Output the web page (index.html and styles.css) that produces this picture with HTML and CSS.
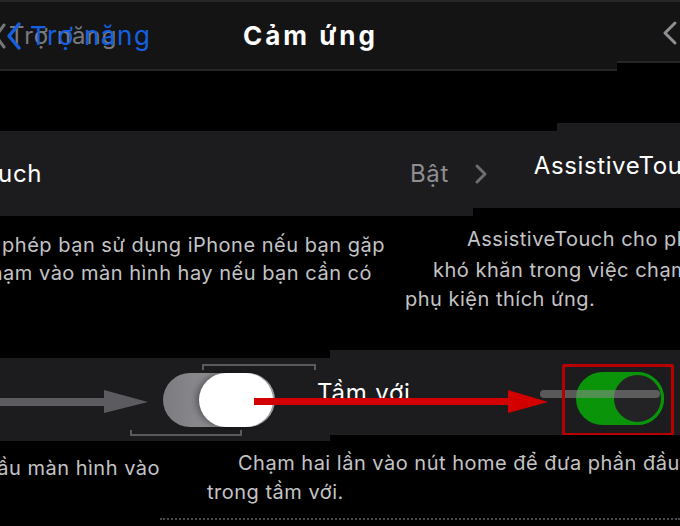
FILE: index.html
```html
<!DOCTYPE html>
<html lang="vi">
<head>
<meta charset="utf-8">
<title>Cảm ứng</title>
<link rel="stylesheet" href="styles.css">
</head>
<body>
<div class="screen">
  <header class="nav">
    <div class="back">
      <div class="back-ghost">
        <svg class="chev-ghost" width="12" height="26" viewBox="0 0 12 26"><path d="M10 2 L2 13 L10 24" fill="none" stroke="#77777b" stroke-width="3" stroke-linecap="round" stroke-linejoin="round"/></svg>
        <span>Trợ năng</span>
      </div>
      <div class="back-main">
        <svg class="chev-blue" width="16" height="30" viewBox="0 0 16 30"><path d="M13 3 L3 15 L13 27" fill="none" stroke="#1560e0" stroke-width="3.5" stroke-linecap="round" stroke-linejoin="round"/></svg>
        <span>Trợ năng</span>
      </div>
    </div>
    <h1 class="title">Cảm ứng</h1>
    <svg class="chev-right" width="16" height="26" viewBox="0 0 16 26"><path d="M13 3 L3 13 L13 23" fill="none" stroke="#8e8e93" stroke-width="3" stroke-linecap="round" stroke-linejoin="round"/></svg>
  </header>

  <div class="gap"></div>

  <section class="row row1">
    <div class="cut-label"><span>AssistiveTouch</span></div>
    <span class="value">Bật</span>
    <svg class="chev-value" width="14" height="22" viewBox="0 0 14 22"><path d="M3 3 L11 11 L3 19" fill="none" stroke="#6d6d72" stroke-width="3" stroke-linecap="round" stroke-linejoin="round"/></svg>
    <span class="label-b">AssistiveTouch</span>
  </section>

  <div class="desc desc1">
    <div class="layer layer-a">
      <div class="line a1"><span>AssistiveTouch cho phép bạn sử dụng iPhone nếu bạn gặp</span></div>
      <div class="line a2"><span>khó khăn trong việc chạm vào màn hình hay nếu bạn cần có</span></div>
    </div>
    <div class="layer layer-b">
      <div class="line b1">AssistiveTouch cho phép bạn sử dụng iPhone nếu bạn gặp</div>
      <div class="line b2">khó khăn trong việc chạm vào màn hình hay nếu bạn cần có</div>
      <div class="line b3">phụ kiện thích ứng.</div>
    </div>
  </div>

  <section class="row row2">
    <svg class="arrow-gray" width="150" height="26" viewBox="0 0 150 26"><path d="M0 9 H104 V1 L148 13 L104 24 V17 H0 Z" fill="#5b5b60"/></svg>
    <div class="toggle-off">
      <span class="knob-white"></span>
    </div>
    <span class="bracket bracket-top"></span>
    <span class="bracket bracket-bottom"></span>
    <span class="label-reach">Tầm với</span>
    <div class="toggle-on">
      <span class="knob-dark"></span>
    </div>
    <span class="ghost-line"></span>
    <svg class="arrow-red" width="296" height="26" viewBox="0 0 296 26"><path d="M0 9 H254 V1 L294 13 L254 24 V16 H0 Z" fill="#d30000"/></svg>
    <span class="red-box"></span>
  </section>

  <div class="desc desc2">
    <div class="layer layer-a">
      <div class="line c1"><span>Chạm hai lần vào nút home để đưa phần đầu màn hình vào</span></div>
    </div>
    <div class="layer layer-b">
      <div class="line d1">Chạm hai lần vào nút home để đưa phần đầu</div>
      <div class="line d2">trong tầm với.</div>
    </div>
  </div>
  <div class="dots"></div>
</div>
</body>
</html>
```

FILE: styles.css
```css
* { box-sizing: border-box; margin: 0; padding: 0; }

html, body {
  width: 680px;
  height: 526px;
  overflow: hidden;
  background: #000;
}

body {
  font-family: Inter, "Noto Sans", "DejaVu Sans", sans-serif;
  color: #fff;
}

.screen {
  position: relative;
  width: 680px;
  height: 526px;
  overflow: hidden;
}

/* ---------- nav bar ---------- */
.nav {
  position: relative;
  height: 71px;
  background: #141414;
  border-top: 2px solid #262626;
  border-bottom: 2px solid #262626;
  display: flex;
  align-items: center;
}

.nav > * { flex-shrink: 0; }

.nav::after {
  content: "";
  position: absolute;
  right: 0;
  bottom: -2px;
  width: 63px;
  height: 8px;
  background: #000;
  border-top: 2px solid #262626;
}

.back {
  display: grid;
  width: 243px;
  align-items: center;
}

.back > * { grid-area: 1 / 1; }

.back-ghost {
  display: flex;
  align-items: center;
  gap: 3px;
  margin-left: -6px;
  color: #7a7a7e;
  font-size: 24px;
  letter-spacing: 1px;
}

.back-main {
  display: flex;
  align-items: center;
  gap: 8px;
  margin-left: 6px;
  color: #1560e0;
  font-size: 26px;
  letter-spacing: 1.6px;
}

.title {
  width: 419px;
  font-size: 26px;
  font-weight: 700;
  letter-spacing: 3px;
  color: #fff;
}

.chev-right { margin-top: -6px; }

.gap { height: 60px; }

/* ---------- rows ---------- */
.row {
  position: relative;
  background: #1c1c1e;
  display: flex;
  align-items: center;
}

.row > * { flex-shrink: 0; }

.row1 { height: 85px; }

.row1::before {
  content: "";
  position: absolute;
  right: 0;
  top: -8px;
  width: 123px;
  height: 8px;
  background: #1c1c1e;
}

.row1::after {
  content: "";
  position: absolute;
  right: 0;
  bottom: 0;
  width: 207px;
  height: 8px;
  background: #000;
}

.cut-label {
  width: 42px;
  display: flex;
  justify-content: flex-end;
  white-space: nowrap;
  font-size: 24px;
  letter-spacing: 0.6px;
}

.value {
  margin-left: 368px;
  font-size: 24px;
  color: #8e8e93;
  letter-spacing: 0.6px;
}

.chev-value { margin-left: 25px; }

.label-b {
  margin-left: 46px;
  margin-bottom: 16px;
  white-space: nowrap;
  font-size: 24px;
  letter-spacing: 0.6px;
}

/* ---------- descriptions ---------- */
.desc {
  display: grid;
  font-size: 20px;
  color: #c4c4c6;
  white-space: nowrap;
  letter-spacing: 0.5px;
}

.desc > .layer { grid-area: 1 / 1; }

.desc1 { height: 142px; }

.line { height: 28px; line-height: 28px; }

.layer-a .line { display: flex; justify-content: flex-end; }
.layer-a .line > span { flex-shrink: 0; }

.a1 { width: 385px; margin-top: 15px; }
.a2 { width: 372px; }

.b1 { padding-left: 467px; margin-top: 7px; height: 32px; line-height: 32px; }
.b2 { padding-left: 433px; height: 30px; line-height: 30px; }
.b3 { padding-left: 405px; }

/* ---------- row 2 ---------- */
.row2 { height: 83px; }

.row2::before {
  content: "";
  position: absolute;
  right: 0;
  top: -8px;
  width: 350px;
  height: 8px;
  background: #1c1c1e;
}

.row2::after {
  content: "";
  position: absolute;
  right: 0;
  bottom: 0;
  width: 350px;
  height: 6px;
  background: #000;
}

.arrow-gray {
  position: absolute;
  left: 0;
  top: 31px;
}

.toggle-off {
  position: relative;
  margin-left: 163px;
  width: 112px;
  height: 54px;
  border-radius: 27px;
  background: linear-gradient(90deg, #7c7c80, #a4a4a8);
}

.knob-white {
  position: absolute;
  right: 2px;
  top: 0;
  width: 74px;
  height: 54px;
  border-radius: 27px;
  background: #fff;
  box-shadow: -3px 0 6px rgba(0,0,0,0.35);
}

.bracket {
  position: absolute;
  height: 6px;
  border: 2px solid #5a5a5e;
}

.bracket-top {
  left: 202px;
  top: 6px;
  width: 114px;
  border-bottom: none;
}

.bracket-bottom {
  left: 130px;
  bottom: 5px;
  width: 112px;
  border-top: none;
}

.label-reach {
  margin-left: 42px;
  margin-bottom: 14px;
  font-size: 24px;
  letter-spacing: 0.8px;
  color: #fff;
}

.toggle-on {
  position: relative;
  margin-left: 165px;
  margin-bottom: 2px;
  width: 88px;
  height: 53px;
  border-radius: 27px;
  background: #0a940a;
}

.knob-dark {
  position: absolute;
  right: 0;
  top: 0;
  width: 53px;
  height: 53px;
  border-radius: 50%;
  background: #232325;
  border: 3px solid #0a940a;
}

.ghost-line {
  position: absolute;
  left: 540px;
  top: 32px;
  width: 120px;
  height: 8px;
  border-radius: 4px;
  background: rgba(140, 140, 140, 0.55);
}

.arrow-red {
  position: absolute;
  left: 254px;
  top: 31px;
}

.red-box {
  position: absolute;
  left: 562px;
  top: 6px;
  width: 112px;
  height: 72px;
  border: 3px solid #b80000;
  border-radius: 2px;
}

/* ---------- bottom description ---------- */
.desc2 { height: 77px; }

.c1 { width: 160px; margin-top: 13px; }
.d1 { padding-left: 238px; margin-top: 7px; height: 30px; line-height: 30px; }
.d2 { padding-left: 207px; }

.dots {
  margin-left: 160px;
  border-top: 2px dotted #4a4a4e;
}
```
